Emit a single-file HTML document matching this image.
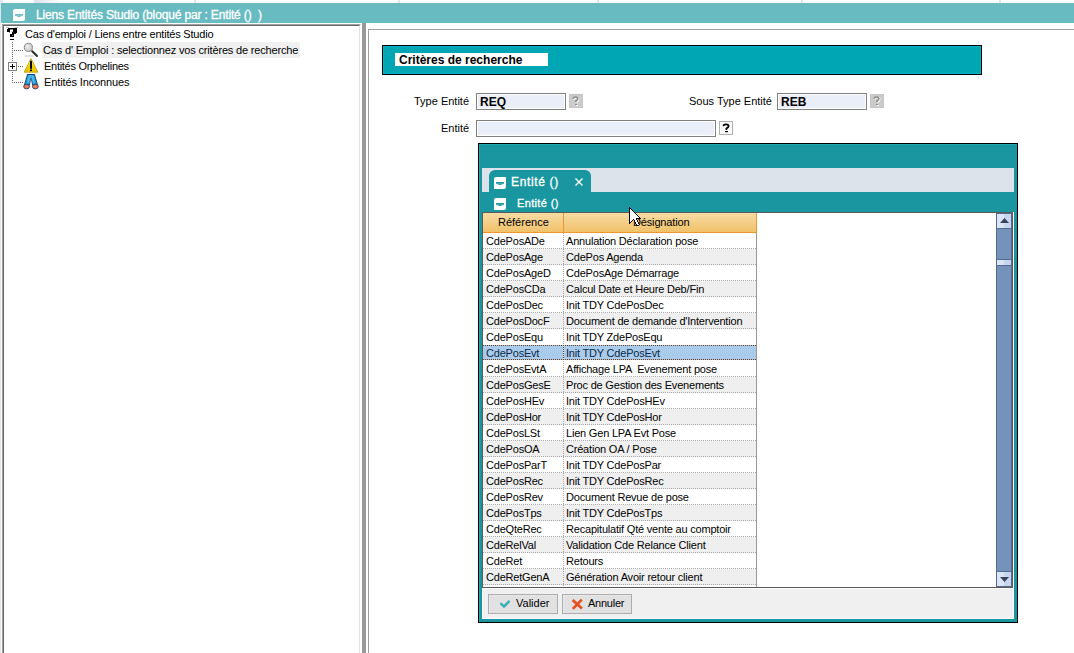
<!DOCTYPE html>
<html><head><meta charset="utf-8">
<style>
*{margin:0;padding:0;box-sizing:border-box}
html,body{width:1074px;height:653px;overflow:hidden;background:#fff;font-family:"Liberation Sans",sans-serif;color:#000}
.a{position:absolute}
.t{position:absolute;white-space:pre;line-height:1}
.row{left:483px;width:274px;height:16px;background-image:linear-gradient(#999,#999),repeating-linear-gradient(180deg,#a8a8a8 0 1px,transparent 1px 2px),repeating-linear-gradient(90deg,#a8a8a8 0 1px,transparent 1px 2px);background-size:1px 100%,1px 100%,273px 1px;background-position:273px 0,80px 0,0 15px;background-repeat:no-repeat}
.row.nd{background-image:linear-gradient(#999,#999),repeating-linear-gradient(180deg,#a8a8a8 0 1px,transparent 1px 2px);background-size:1px 100%,1px 100%;background-position:273px 0,80px 0}
.sel{left:483px;width:274px;height:16px;background-color:#fff;background-image:linear-gradient(#999,#999),repeating-linear-gradient(90deg,#6a3a1a 0 1px,transparent 1px 2px),repeating-linear-gradient(90deg,#6a3a1a 0 1px,transparent 1px 2px),repeating-linear-gradient(180deg,#333 0 1px,#fff 1px 2px),linear-gradient(#aacbea,#aacbea);background-size:1px 100%,273px 1px,273px 1px,1px 15px,273px 15px;background-position:273px 0,0 0,0 14px,80px 0,0 0;background-repeat:no-repeat}
</style></head><body>
<!-- left light column -->
<div class="a" style="left:0;top:0;width:1px;height:653px;background:#dfe5ec"></div>
<div class="a" style="left:1px;top:0;width:2px;height:3px;background:#e4e9ef"></div>
<div class="a" style="left:34px;top:0;width:26px;height:3px;background:linear-gradient(90deg,#d9e1ea,#fff)"></div>
<div class="a" style="left:194px;top:0;width:2px;height:3px;background:#dfe5ec"></div><div class="a" style="left:398px;top:0;width:2px;height:3px;background:#dfe5ec"></div><div class="a" style="left:597px;top:0;width:2px;height:3px;background:#dfe5ec"></div><div class="a" style="left:801px;top:0;width:2px;height:3px;background:#dfe5ec"></div><div class="a" style="left:999px;top:0;width:2px;height:3px;background:#dfe5ec"></div>
<!-- title bar -->
<div class="a" style="left:1px;top:3px;width:1073px;height:20px;background:#69bbc2"></div>
<svg class="a" style="left:13px;top:9px" width="12" height="12"><path d="M2 0 H12 V10 Q12 12 10 12 H0 V2 Q0 0 2 0 Z" fill="#fff"/><path d="M2 5.9 L10 5.9" stroke="#69bbc2" stroke-width="1.7"/><path d="M3.6 6.6 Q6 8.2 8.4 6.6" stroke="#69bbc2" stroke-width="1.1" fill="none"/></svg>
<div class="t" style="left:36px;top:9px;font-size:12px;letter-spacing:-0.15px;color:#fff;-webkit-text-stroke:0.3px #fff">Liens Entités Studio (bloqué par : Entité ()  )</div>

<!-- left panel sunken border -->
<div class="a" style="left:2px;top:24px;width:359px;height:640px;border-top:1px solid #a0a0a0;border-left:1px solid #a0a0a0;border-right:1px solid #fff"></div>
<div class="a" style="left:3px;top:25px;width:357px;height:640px;border-top:1px solid #696969;border-left:1px solid #696969;border-right:1px solid #e3e3e3"></div>
<!-- splitter -->
<div class="a" style="left:362px;top:23px;width:4px;height:630px;background:#999"></div>
<!-- right panel border -->
<div class="a" style="left:368px;top:29px;width:706px;height:630px;border-top:1px solid #a0a0a0;border-left:1px solid #a0a0a0"></div>

<!-- tree -->
<div class="t" style="left:25px;top:29px;font-size:11px;letter-spacing:-0.2px">Cas d'emploi / Liens entre entités Studio</div>
<div class="a" style="left:42px;top:42px;width:258px;height:16px;background:#f0f0f0"></div>
<div class="t" style="left:43px;top:45px;font-size:11px;letter-spacing:-0.17px">Cas d' Emploi : selectionnez vos critères de recherche</div>
<div class="t" style="left:44px;top:61px;font-size:11px;letter-spacing:-0.28px">Entités Orphelines</div>
<div class="t" style="left:44px;top:77px;font-size:11px;letter-spacing:-0.12px">Entités Inconnues</div>


<!-- tree icons -->
<svg class="a" style="left:0;top:24px" width="45" height="70" viewBox="0 24 45 70">
<defs>
<radialGradient id="lens" cx="0.4" cy="0.4" r="0.6"><stop offset="0" stop-color="#f0f0f0"/><stop offset="1" stop-color="#c4c4c4"/></radialGradient>
<linearGradient id="warn" x1="0" y1="0" x2="0" y2="1"><stop offset="0" stop-color="#fff6a0"/><stop offset="0.5" stop-color="#f6d800"/><stop offset="1" stop-color="#e8c000"/></linearGradient>
<linearGradient id="leg" x1="0" y1="0" x2="1" y2="0"><stop offset="0" stop-color="#1590d0"/><stop offset="0.5" stop-color="#40b8f0"/><stop offset="1" stop-color="#1590d0"/></linearGradient>
</defs>
<g shape-rendering="crispEdges"><rect x="6" y="27" width="3" height="1" fill="#c8c8c8"/><rect x="15" y="27" width="3" height="1" fill="#c8c8c8"/>
<rect x="8" y="28" width="9" height="1" fill="#000"/><rect x="7" y="29" width="3" height="3" fill="#000"/><rect x="13" y="29" width="4" height="4" fill="#000"/>
<rect x="10" y="29" width="3" height="1" fill="#888"/><rect x="11" y="31" width="2" height="1" fill="#ccc"/>
<rect x="12" y="32" width="4" height="2" fill="#111"/><rect x="10" y="34" width="4" height="3" fill="#000"/><rect x="12" y="35" width="1" height="1" fill="#777"/><rect x="9" y="32" width="1" height="1" fill="#999"/></g>

<rect x="10" y="39" width="4" height="1" fill="#000"/>
<g fill="#646464">
<rect x="12" y="42" width="1" height="1"/><rect x="12" y="44" width="1" height="1"/><rect x="12" y="46" width="1" height="1"/><rect x="12" y="48" width="1" height="1"/><rect x="12" y="50" width="1" height="1"/><rect x="12" y="52" width="1" height="1"/><rect x="12" y="54" width="1" height="1"/><rect x="12" y="56" width="1" height="1"/><rect x="12" y="58" width="1" height="1"/><rect x="12" y="60" width="1" height="1"/>
<rect x="14" y="50" width="1" height="1"/><rect x="16" y="50" width="1" height="1"/><rect x="18" y="50" width="1" height="1"/><rect x="20" y="50" width="1" height="1"/><rect x="22" y="50" width="1" height="1"/>
<rect x="18" y="66" width="1" height="1"/><rect x="20" y="66" width="1" height="1"/><rect x="22" y="66" width="1" height="1"/>
<rect x="12" y="72" width="1" height="1"/><rect x="12" y="74" width="1" height="1"/><rect x="12" y="76" width="1" height="1"/><rect x="12" y="78" width="1" height="1"/><rect x="12" y="80" width="1" height="1"/><rect x="12" y="82" width="1" height="1"/>
<rect x="14" y="82" width="1" height="1"/><rect x="16" y="82" width="1" height="1"/><rect x="18" y="82" width="1" height="1"/><rect x="20" y="82" width="1" height="1"/><rect x="22" y="82" width="1" height="1"/>
</g>
<rect x="8.5" y="62.5" width="8" height="8" fill="#fff" stroke="#808080" stroke-width="1"/>
<rect x="10" y="66" width="5" height="1" fill="#000"/><rect x="12" y="64" width="1" height="5" fill="#000"/>
<ellipse cx="29" cy="56" rx="5" ry="1.2" fill="#e2e2e2"/>
<circle cx="28.4" cy="47.4" r="4.1" fill="url(#lens)" stroke="#8a8a8a" stroke-width="1"/>
<path d="M32.2 51.2 L37 56" stroke="#2a2a2a" stroke-width="2" stroke-linecap="round"/>
<path d="M31 58.6 L37.8 72.2 L24.2 72.2 Z" fill="url(#warn)" stroke="#b89800" stroke-width="0.8" stroke-linejoin="round"/>
<path d="M31 61.5 L31 68" stroke="#000" stroke-width="2" stroke-linecap="round"/>
<rect x="30" y="69.5" width="2" height="1.6" fill="#000"/>
<path d="M27.2 74 L34.8 74 L38.2 85.5 L32.2 85.5 L31 79 L29.8 85.5 L23.8 85.5 Z" fill="#1a4468"/>
<path d="M27.9 75 L34.1 75 L37 84.6 L33 84.6 L31 76.8 L29 84.6 L25 84.6 Z" fill="url(#leg)"/>
<path d="M29.2 76 L28 83 M32.8 76 L34 83" stroke="#7fd4ff" stroke-width="0.8" opacity="0.7"/>
<ellipse cx="26.6" cy="86.6" rx="2.9" ry="2.3" fill="#f07858" stroke="#1a4468" stroke-width="0.9"/>
<ellipse cx="35.4" cy="86.6" rx="2.9" ry="2.3" fill="#f07858" stroke="#1a4468" stroke-width="0.9"/>
</svg>

<!-- criteria header -->
<div class="a" style="left:382px;top:45px;width:600px;height:30px;background:#00a6b4;border:1px solid #000;box-shadow:inset 0 0 0 1px #00b6c4"></div>
<div class="a" style="left:395px;top:53px;width:153px;height:13px;background:#fff"></div>
<div class="t" style="left:399px;top:54px;font-size:12px;font-weight:bold">Critères de recherche</div>

<div class="t" style="left:414px;top:96px;font-size:11px">Type Entité</div>
<div class="a" style="left:476px;top:93px;width:90px;height:17px;border:1px solid #808080;background:#e9eef9;box-shadow:inset 1px 1px 0 #fff,inset -1px -1px 0 #fff"></div>
<div class="t" style="left:480px;top:96px;font-size:12px;font-weight:bold">REQ</div>
<svg class="a" style="left:569px;top:94px" width="14" height="14"><rect x="0" y="0" width="14" height="14" fill="#c6c6c6"/><rect x="1" y="1" width="12" height="12" fill="#cbcbcb"/><path d="M5.2 5.6 Q5 3.7 7.3 3.7 Q9.6 3.7 9.6 5.5 Q9.6 6.8 8 7.4 L7.4 9" stroke="#fff" stroke-width="1.7" fill="none"/><rect x="7" y="11" width="2" height="1" fill="#fff"/><path d="M4.4 4.9 Q4.3 3 6.5 3 Q8.8 3 8.8 4.8 Q8.8 6.1 7.2 6.7 L6.6 8.3" stroke="#8c8c8c" stroke-width="1.7" fill="none"/><rect x="6" y="10" width="2" height="1" fill="#8c8c8c"/></svg>

<div class="t" style="left:689px;top:96px;font-size:11px">Sous Type Entité</div>
<div class="a" style="left:777px;top:93px;width:90px;height:17px;border:1px solid #808080;background:#e9eef9;box-shadow:inset 1px 1px 0 #fff,inset -1px -1px 0 #fff"></div>
<div class="t" style="left:781px;top:96px;font-size:12px;font-weight:bold">REB</div>
<svg class="a" style="left:870px;top:94px" width="14" height="14"><rect x="0" y="0" width="14" height="14" fill="#c6c6c6"/><rect x="1" y="1" width="12" height="12" fill="#cbcbcb"/><path d="M5.2 5.6 Q5 3.7 7.3 3.7 Q9.6 3.7 9.6 5.5 Q9.6 6.8 8 7.4 L7.4 9" stroke="#fff" stroke-width="1.7" fill="none"/><rect x="7" y="11" width="2" height="1" fill="#fff"/><path d="M4.4 4.9 Q4.3 3 6.5 3 Q8.8 3 8.8 4.8 Q8.8 6.1 7.2 6.7 L6.6 8.3" stroke="#8c8c8c" stroke-width="1.7" fill="none"/><rect x="6" y="10" width="2" height="1" fill="#8c8c8c"/></svg>

<div class="t" style="left:441px;top:123px;font-size:11px">Entité</div>
<div class="a" style="left:476px;top:120px;width:240px;height:17px;border:1px solid #808080;background:#e9eef9;box-shadow:inset 1px 1px 0 #fff,inset -1px -1px 0 #fff"></div>
<svg class="a" style="left:719px;top:121px" width="14" height="14"><rect x="0.5" y="0.5" width="13" height="13" fill="#fafafa" stroke="#b0b0b0"/><path d="M4.6 5.2 Q4.4 3.3 7 3.3 Q9.6 3.3 9.6 5.1 Q9.6 6.5 7.8 7.2 L6.9 8.8" stroke="#000" stroke-width="1.8" fill="none"/><rect x="6" y="10" width="3" height="1.2" fill="#000"/></svg>

<!-- popup -->
<div class="a" style="left:478px;top:143px;width:540px;height:480px;background:#1996a0;border:1px solid #000;box-shadow:inset 1px 1px 0 #1fa6ae"></div>
<div class="a" style="left:482px;top:168px;width:532px;height:24px;background:#dce3ea"></div>
<div class="a" style="left:489px;top:170px;width:102px;height:22px;background:#1996a0;border-radius:6px 6px 0 0"></div>
<svg class="a" style="left:494px;top:177px" width="12" height="12"><path d="M2 0 H12 V10 Q12 12 10 12 H0 V2 Q0 0 2 0 Z" fill="#fff"/><path d="M2 5.9 L10 5.9" stroke="#1996a0" stroke-width="1.7"/><path d="M3.6 6.6 Q6 8.2 8.4 6.6" stroke="#1996a0" stroke-width="1.1" fill="none"/></svg><div class="t" style="left:511px;top:176px;font-size:12px;letter-spacing:0.65px;color:#fff;-webkit-text-stroke:0.3px #fff">Entité ()</div><svg class="a" style="left:574px;top:177px" width="10" height="10"><path d="M1.5 1.5 L8.5 8.5 M8.5 1.5 L1.5 8.5" stroke="#fff" stroke-width="1.4"/></svg>
<svg class="a" style="left:494px;top:198px" width="12" height="12"><path d="M2 0 H12 V10 Q12 12 10 12 H0 V2 Q0 0 2 0 Z" fill="#fff"/><path d="M2 5.9 L10 5.9" stroke="#1996a0" stroke-width="1.7"/><path d="M3.6 6.6 Q6 8.2 8.4 6.6" stroke="#1996a0" stroke-width="1.1" fill="none"/></svg><div class="t" style="left:517px;top:198px;font-size:11px;letter-spacing:0.35px;color:#fff;-webkit-text-stroke:0.3px #fff">Entité ()</div>

<!-- grid -->
<div class="a" style="left:482px;top:212px;width:531px;height:376px;background:#fff;border:1px solid #5a5a5a"></div>
<div class="a" style="left:483px;top:213px;width:273px;height:20px;background:linear-gradient(#f8dca5,#f0c169);border-bottom:1px solid #f0962c"></div>
<div class="a" style="left:563px;top:213px;width:1px;height:20px;background:#f0962c"></div>
<div class="a" style="left:756px;top:213px;width:1px;height:20px;background:#f0962c"></div>
<div class="t" style="left:498px;top:217px;font-size:11px">Référence</div>
<div class="t" style="left:633px;top:217px;font-size:11px;letter-spacing:-0.15px">Désignation</div>

<div id="rows">
<div class="a row" style="top:233px;background-color:#fff"></div>
<div class="t" style="left:486px;top:236px;font-size:11px;letter-spacing:-0.2px">CdePosADe</div>
<div class="t" style="left:566px;top:236px;font-size:11px;letter-spacing:-0.2px">Annulation Déclaration pose</div>
<div class="a row" style="top:249px;background-color:#efefef"></div>
<div class="t" style="left:486px;top:252px;font-size:11px;letter-spacing:-0.2px">CdePosAge</div>
<div class="t" style="left:566px;top:252px;font-size:11px;letter-spacing:-0.2px">CdePos Agenda</div>
<div class="a row" style="top:265px;background-color:#fff"></div>
<div class="t" style="left:486px;top:268px;font-size:11px;letter-spacing:-0.2px">CdePosAgeD</div>
<div class="t" style="left:566px;top:268px;font-size:11px;letter-spacing:-0.2px">CdePosAge Démarrage</div>
<div class="a row" style="top:281px;background-color:#efefef"></div>
<div class="t" style="left:486px;top:284px;font-size:11px;letter-spacing:-0.2px">CdePosCDa</div>
<div class="t" style="left:566px;top:284px;font-size:11px;letter-spacing:-0.2px">Calcul Date et Heure Deb/Fin</div>
<div class="a row" style="top:297px;background-color:#fff"></div>
<div class="t" style="left:486px;top:300px;font-size:11px;letter-spacing:-0.2px">CdePosDec</div>
<div class="t" style="left:566px;top:300px;font-size:11px;letter-spacing:-0.2px">Init TDY CdePosDec</div>
<div class="a row" style="top:313px;background-color:#efefef"></div>
<div class="t" style="left:486px;top:316px;font-size:11px;letter-spacing:-0.2px">CdePosDocF</div>
<div class="t" style="left:566px;top:316px;font-size:11px;letter-spacing:-0.2px">Document de demande d'Intervention</div>
<div class="a row nd" style="top:329px;background-color:#fff"></div>
<div class="t" style="left:486px;top:332px;font-size:11px;letter-spacing:-0.2px">CdePosEqu</div>
<div class="t" style="left:566px;top:332px;font-size:11px;letter-spacing:-0.2px">Init TDY ZdePosEqu</div>
<div class="a sel" style="top:345px"></div>
<div class="t" style="left:486px;top:348px;font-size:11px;letter-spacing:-0.2px;color:#0a2a4a">CdePosEvt</div>
<div class="t" style="left:566px;top:348px;font-size:11px;letter-spacing:-0.2px;color:#0a2a4a">Init TDY CdePosEvt</div>
<div class="a row" style="top:361px;background-color:#fff"></div>
<div class="t" style="left:486px;top:364px;font-size:11px;letter-spacing:-0.2px">CdePosEvtA</div>
<div class="t" style="left:566px;top:364px;font-size:11px;letter-spacing:-0.2px">Affichage LPA  Evenement pose</div>
<div class="a row" style="top:377px;background-color:#efefef"></div>
<div class="t" style="left:486px;top:380px;font-size:11px;letter-spacing:-0.2px">CdePosGesE</div>
<div class="t" style="left:566px;top:380px;font-size:11px;letter-spacing:-0.2px">Proc de Gestion des Evenements</div>
<div class="a row" style="top:393px;background-color:#fff"></div>
<div class="t" style="left:486px;top:396px;font-size:11px;letter-spacing:-0.2px">CdePosHEv</div>
<div class="t" style="left:566px;top:396px;font-size:11px;letter-spacing:-0.2px">Init TDY CdePosHEv</div>
<div class="a row" style="top:409px;background-color:#efefef"></div>
<div class="t" style="left:486px;top:412px;font-size:11px;letter-spacing:-0.2px">CdePosHor</div>
<div class="t" style="left:566px;top:412px;font-size:11px;letter-spacing:-0.2px">Init TDY CdePosHor</div>
<div class="a row" style="top:425px;background-color:#fff"></div>
<div class="t" style="left:486px;top:428px;font-size:11px;letter-spacing:-0.2px">CdePosLSt</div>
<div class="t" style="left:566px;top:428px;font-size:11px;letter-spacing:-0.2px">Lien Gen LPA Evt Pose</div>
<div class="a row" style="top:441px;background-color:#efefef"></div>
<div class="t" style="left:486px;top:444px;font-size:11px;letter-spacing:-0.2px">CdePosOA</div>
<div class="t" style="left:566px;top:444px;font-size:11px;letter-spacing:-0.2px">Création OA / Pose</div>
<div class="a row" style="top:457px;background-color:#fff"></div>
<div class="t" style="left:486px;top:460px;font-size:11px;letter-spacing:-0.2px">CdePosParT</div>
<div class="t" style="left:566px;top:460px;font-size:11px;letter-spacing:-0.2px">Init TDY CdePosPar</div>
<div class="a row" style="top:473px;background-color:#efefef"></div>
<div class="t" style="left:486px;top:476px;font-size:11px;letter-spacing:-0.2px">CdePosRec</div>
<div class="t" style="left:566px;top:476px;font-size:11px;letter-spacing:-0.2px">Init TDY CdePosRec</div>
<div class="a row" style="top:489px;background-color:#fff"></div>
<div class="t" style="left:486px;top:492px;font-size:11px;letter-spacing:-0.2px">CdePosRev</div>
<div class="t" style="left:566px;top:492px;font-size:11px;letter-spacing:-0.2px">Document Revue de pose</div>
<div class="a row" style="top:505px;background-color:#efefef"></div>
<div class="t" style="left:486px;top:508px;font-size:11px;letter-spacing:-0.2px">CdePosTps</div>
<div class="t" style="left:566px;top:508px;font-size:11px;letter-spacing:-0.2px">Init TDY CdePosTps</div>
<div class="a row" style="top:521px;background-color:#fff"></div>
<div class="t" style="left:486px;top:524px;font-size:11px;letter-spacing:-0.2px">CdeQteRec</div>
<div class="t" style="left:566px;top:524px;font-size:11px;letter-spacing:-0.2px">Recapitulatif Qté vente au comptoir</div>
<div class="a row" style="top:537px;background-color:#efefef"></div>
<div class="t" style="left:486px;top:540px;font-size:11px;letter-spacing:-0.2px">CdeRelVal</div>
<div class="t" style="left:566px;top:540px;font-size:11px;letter-spacing:-0.2px">Validation Cde Relance Client</div>
<div class="a row" style="top:553px;background-color:#fff"></div>
<div class="t" style="left:486px;top:556px;font-size:11px;letter-spacing:-0.2px">CdeRet</div>
<div class="t" style="left:566px;top:556px;font-size:11px;letter-spacing:-0.2px">Retours</div>
<div class="a row" style="top:569px;background-color:#efefef"></div>
<div class="t" style="left:486px;top:572px;font-size:11px;letter-spacing:-0.2px">CdeRetGenA</div>
<div class="t" style="left:566px;top:572px;font-size:11px;letter-spacing:-0.2px">Génération Avoir retour client</div>
</div><!--/rows-->

<div class="a" style="left:756px;top:585px;width:1px;height:2px;background:#999"></div><div class="a" style="left:563px;top:585px;width:1px;height:1px;background:#a8a8a8"></div>
<!-- scrollbar -->
<div class="a" style="left:996px;top:213px;width:16px;height:374px;background:#7592ba;border-left:1px solid #56698f;border-right:1px solid #56698f"></div><svg class="a" style="left:996px;top:213px" width="16" height="16"><rect x="0.5" y="0.5" width="15" height="15" fill="#c6d6ee" stroke="#56698f"/><rect x="1" y="1" width="7" height="14" fill="#dbe5f4"/><path d="M4 10 L13 10 L8.5 5 Z" fill="#3a4260"/></svg><svg class="a" style="left:996px;top:571px" width="16" height="16"><rect x="0.5" y="0.5" width="15" height="15" fill="#c6d6ee" stroke="#56698f"/><rect x="1" y="1" width="7" height="14" fill="#dbe5f4"/><path d="M4 6 L13 6 L8.5 11 Z" fill="#3a4260"/></svg><svg class="a" style="left:996px;top:259px" width="16" height="7"><rect x="0.5" y="0.5" width="15" height="6" fill="#c6d6ee" stroke="#56698f"/><rect x="1" y="1" width="7" height="5" fill="#dbe5f4"/></svg>

<!-- buttons panel -->
<div class="a" style="left:1013px;top:212px;width:1px;height:406px;background:#fcfcfc"></div>
<div class="a" style="left:482px;top:588px;width:532px;height:31px;background:#f0f0f0;border:1px solid #fcfcfc"></div>
<div class="a" style="left:488px;top:594px;width:70px;height:20px;background:#e1e1e1;border:1px solid #adadad;box-shadow:inset 1px 1px 0 #e8e8e8"></div><svg class="a" style="left:496px;top:597px" width="18" height="14"><path d="M5.2 6.8 L8 9.6 L12.8 4.6" stroke="#35b0b8" stroke-width="2.4" fill="none" stroke-linecap="round" stroke-linejoin="round"/></svg>
<div class="t" style="left:516px;top:598px;font-size:11px">Valider</div>
<div class="a" style="left:562px;top:594px;width:70px;height:20px;background:#e1e1e1;border:1px solid #adadad;box-shadow:inset 1px 1px 0 #e8e8e8"></div><svg class="a" style="left:568px;top:596px" width="18" height="16"><path d="M4.6 4 L14 12.6 M13.8 3.6 L4.8 12.9" stroke="#e8501e" stroke-width="2.7" fill="none"/></svg>
<div class="t" style="left:588px;top:598px;font-size:11px;letter-spacing:-0.25px">Annuler</div>
<!-- cursor -->
<svg class="a" style="left:629px;top:207px" width="12" height="19" shape-rendering="crispEdges"><rect x="0" y="0" width="1" height="1" fill="#000"/><rect x="0" y="1" width="1" height="1" fill="#000"/><rect x="1" y="1" width="1" height="1" fill="#000"/><rect x="0" y="2" width="1" height="1" fill="#000"/><rect x="1" y="2" width="1" height="1" fill="#fff"/><rect x="2" y="2" width="1" height="1" fill="#000"/><rect x="0" y="3" width="1" height="1" fill="#000"/><rect x="1" y="3" width="1" height="1" fill="#fff"/><rect x="2" y="3" width="1" height="1" fill="#fff"/><rect x="3" y="3" width="1" height="1" fill="#000"/><rect x="0" y="4" width="1" height="1" fill="#000"/><rect x="1" y="4" width="1" height="1" fill="#fff"/><rect x="2" y="4" width="1" height="1" fill="#fff"/><rect x="3" y="4" width="1" height="1" fill="#fff"/><rect x="4" y="4" width="1" height="1" fill="#000"/><rect x="0" y="5" width="1" height="1" fill="#000"/><rect x="1" y="5" width="1" height="1" fill="#fff"/><rect x="2" y="5" width="1" height="1" fill="#fff"/><rect x="3" y="5" width="1" height="1" fill="#fff"/><rect x="4" y="5" width="1" height="1" fill="#fff"/><rect x="5" y="5" width="1" height="1" fill="#000"/><rect x="0" y="6" width="1" height="1" fill="#000"/><rect x="1" y="6" width="1" height="1" fill="#fff"/><rect x="2" y="6" width="1" height="1" fill="#fff"/><rect x="3" y="6" width="1" height="1" fill="#fff"/><rect x="4" y="6" width="1" height="1" fill="#fff"/><rect x="5" y="6" width="1" height="1" fill="#fff"/><rect x="6" y="6" width="1" height="1" fill="#000"/><rect x="0" y="7" width="1" height="1" fill="#000"/><rect x="1" y="7" width="1" height="1" fill="#fff"/><rect x="2" y="7" width="1" height="1" fill="#fff"/><rect x="3" y="7" width="1" height="1" fill="#fff"/><rect x="4" y="7" width="1" height="1" fill="#fff"/><rect x="5" y="7" width="1" height="1" fill="#fff"/><rect x="6" y="7" width="1" height="1" fill="#fff"/><rect x="7" y="7" width="1" height="1" fill="#000"/><rect x="0" y="8" width="1" height="1" fill="#000"/><rect x="1" y="8" width="1" height="1" fill="#fff"/><rect x="2" y="8" width="1" height="1" fill="#fff"/><rect x="3" y="8" width="1" height="1" fill="#fff"/><rect x="4" y="8" width="1" height="1" fill="#fff"/><rect x="5" y="8" width="1" height="1" fill="#fff"/><rect x="6" y="8" width="1" height="1" fill="#fff"/><rect x="7" y="8" width="1" height="1" fill="#fff"/><rect x="8" y="8" width="1" height="1" fill="#000"/><rect x="0" y="9" width="1" height="1" fill="#000"/><rect x="1" y="9" width="1" height="1" fill="#fff"/><rect x="2" y="9" width="1" height="1" fill="#fff"/><rect x="3" y="9" width="1" height="1" fill="#fff"/><rect x="4" y="9" width="1" height="1" fill="#fff"/><rect x="5" y="9" width="1" height="1" fill="#fff"/><rect x="6" y="9" width="1" height="1" fill="#fff"/><rect x="7" y="9" width="1" height="1" fill="#fff"/><rect x="8" y="9" width="1" height="1" fill="#fff"/><rect x="9" y="9" width="1" height="1" fill="#000"/><rect x="0" y="10" width="1" height="1" fill="#000"/><rect x="1" y="10" width="1" height="1" fill="#fff"/><rect x="2" y="10" width="1" height="1" fill="#fff"/><rect x="3" y="10" width="1" height="1" fill="#fff"/><rect x="4" y="10" width="1" height="1" fill="#fff"/><rect x="5" y="10" width="1" height="1" fill="#fff"/><rect x="6" y="10" width="1" height="1" fill="#fff"/><rect x="7" y="10" width="1" height="1" fill="#fff"/><rect x="8" y="10" width="1" height="1" fill="#fff"/><rect x="9" y="10" width="1" height="1" fill="#fff"/><rect x="10" y="10" width="1" height="1" fill="#000"/><rect x="0" y="11" width="1" height="1" fill="#000"/><rect x="1" y="11" width="1" height="1" fill="#fff"/><rect x="2" y="11" width="1" height="1" fill="#fff"/><rect x="3" y="11" width="1" height="1" fill="#fff"/><rect x="4" y="11" width="1" height="1" fill="#fff"/><rect x="5" y="11" width="1" height="1" fill="#fff"/><rect x="6" y="11" width="1" height="1" fill="#fff"/><rect x="7" y="11" width="1" height="1" fill="#000"/><rect x="8" y="11" width="1" height="1" fill="#000"/><rect x="9" y="11" width="1" height="1" fill="#000"/><rect x="10" y="11" width="1" height="1" fill="#000"/><rect x="11" y="11" width="1" height="1" fill="#000"/><rect x="0" y="12" width="1" height="1" fill="#000"/><rect x="1" y="12" width="1" height="1" fill="#fff"/><rect x="2" y="12" width="1" height="1" fill="#fff"/><rect x="3" y="12" width="1" height="1" fill="#fff"/><rect x="4" y="12" width="1" height="1" fill="#000"/><rect x="5" y="12" width="1" height="1" fill="#fff"/><rect x="6" y="12" width="1" height="1" fill="#fff"/><rect x="7" y="12" width="1" height="1" fill="#000"/><rect x="0" y="13" width="1" height="1" fill="#000"/><rect x="1" y="13" width="1" height="1" fill="#fff"/><rect x="2" y="13" width="1" height="1" fill="#fff"/><rect x="3" y="13" width="1" height="1" fill="#000"/><rect x="5" y="13" width="1" height="1" fill="#000"/><rect x="6" y="13" width="1" height="1" fill="#fff"/><rect x="7" y="13" width="1" height="1" fill="#fff"/><rect x="8" y="13" width="1" height="1" fill="#000"/><rect x="0" y="14" width="1" height="1" fill="#000"/><rect x="1" y="14" width="1" height="1" fill="#fff"/><rect x="2" y="14" width="1" height="1" fill="#000"/><rect x="5" y="14" width="1" height="1" fill="#000"/><rect x="6" y="14" width="1" height="1" fill="#fff"/><rect x="7" y="14" width="1" height="1" fill="#fff"/><rect x="8" y="14" width="1" height="1" fill="#000"/><rect x="0" y="15" width="1" height="1" fill="#000"/><rect x="1" y="15" width="1" height="1" fill="#000"/><rect x="6" y="15" width="1" height="1" fill="#000"/><rect x="7" y="15" width="1" height="1" fill="#fff"/><rect x="8" y="15" width="1" height="1" fill="#fff"/><rect x="9" y="15" width="1" height="1" fill="#000"/><rect x="0" y="16" width="1" height="1" fill="#000"/><rect x="6" y="16" width="1" height="1" fill="#000"/><rect x="7" y="16" width="1" height="1" fill="#fff"/><rect x="8" y="16" width="1" height="1" fill="#fff"/><rect x="9" y="16" width="1" height="1" fill="#000"/><rect x="7" y="17" width="1" height="1" fill="#000"/><rect x="8" y="17" width="1" height="1" fill="#fff"/><rect x="9" y="17" width="1" height="1" fill="#fff"/><rect x="10" y="17" width="1" height="1" fill="#000"/><rect x="8" y="18" width="1" height="1" fill="#000"/><rect x="9" y="18" width="1" height="1" fill="#000"/></svg>
</body></html>
